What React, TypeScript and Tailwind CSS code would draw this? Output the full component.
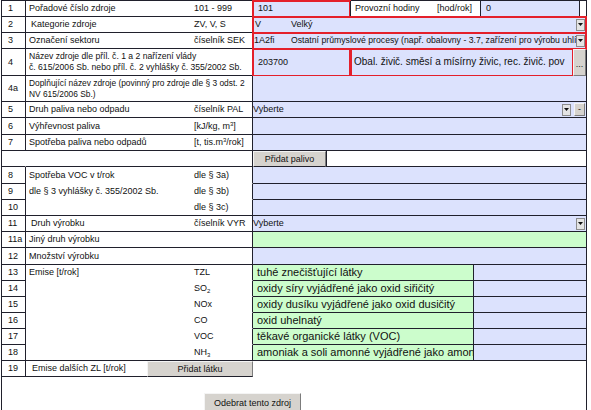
import type { ReactNode } from 'react';

const RED = 'outline-2 outline-[#e4202b] -outline-offset-1';

function Arrow() {
  return (
    <div className="ml-auto mr-[1px] flex h-[12px] w-[9px] shrink-0 items-center justify-center border border-[#8c8c8c] bg-[#e4e4e4]">
      <svg width="5" height="3" viewBox="0 0 5 3">
        <path d="M0 0h5L2.5 3z" fill="#111" />
      </svg>
    </div>
  );
}

function GreyButton({ children, className }: { children: ReactNode; className: string }) {
  return (
    <div
      className={`flex items-center justify-center border border-t-[#f4f4f4] border-l-[#f4f4f4] border-r-[#7c7c7c] border-b-[#7c7c7c] bg-[#d6d3ce] text-[9px] text-[#111] ${className}`}
    >
      {children}
    </div>
  );
}

interface RowProps {
  h: string;
  num?: string;
  noNumLine?: boolean;
  label?: ReactNode;
  unit?: ReactNode;
  openBottom?: boolean;
  children?: ReactNode;
}

function Row({ h, num, noNumLine, label, unit, openBottom, children }: RowProps) {
  return (
    <div className={`flex ${h}`}>
      <div
        className={`flex w-[24px] shrink-0 items-center border-b border-[#20202c] pl-[6px] ${
          noNumLine ? 'border-r border-r-white' : 'border-r'
        }`}
      >
        {num}
      </div>
      <div
        className={`flex w-[227px] shrink-0 items-center border-r border-b border-[#20202c] ${
          openBottom ? 'border-b-white' : ''
        }`}
      >
        <div className="w-[168px] shrink-0 whitespace-nowrap pl-[3px]">{label}</div>
        <div className="whitespace-nowrap">{unit}</div>
      </div>
      <div className="flex min-w-0 flex-1">{children}</div>
    </div>
  );
}

function Blue({ children, className = '' }: { children?: ReactNode; className?: string }) {
  return (
    <div
      className={`flex min-w-0 flex-1 items-center overflow-hidden whitespace-nowrap border-b border-[#20202c] bg-[#dce2fd] ${className}`}
    >
      {children}
    </div>
  );
}

const emissions = [
  ['13', 'Emise [t/rok]', 'TZL', 'tuhé znečišťující látky'],
  ['14', '', <>SO<sub className="text-[6px]">2</sub></>, 'oxidy síry vyjádřené jako oxid siřičitý'],
  ['15', '', 'NOx', 'oxidy dusíku vyjádřené jako oxid dusičitý'],
  ['16', '', 'CO', 'oxid uhelnatý'],
  ['17', '', 'VOC', 'těkavé organické látky (VOC)'],
  ['18', '', <>NH<sub className="text-[6px]">3</sub></>, 'amoniak a soli amonné vyjádřené jako amoniak'],
] as const;

export default function App() {
  return (
    <div className="h-[410px] w-[591px] overflow-hidden bg-white font-['Liberation_Sans',Arial,sans-serif] text-[9px] leading-none text-[#111]">
      <div className="ml-[1px] w-[586px] border-x border-t border-[#20202c]">
        <Row h="h-[16px]" num="1" label="Pořadové číslo zdroje" unit="101 - 999">
          <div className={`flex w-[97px] items-center border-b border-[#20202c] bg-[#dce2fd] pl-[5px] ${RED}`}>101</div>
          <div className="flex w-[130px] items-center border-b border-l border-[#20202c] bg-white pl-[4px]">
            <span className="w-[82px]">Provozní hodiny</span>
            <span>[hod/rok]</span>
          </div>
          <div className="flex w-[99px] shrink-0 items-center border-b border-l border-[#20202c] bg-[#dce2fd] pl-[5px]">0</div>
          <div className="flex-1 border-b border-l border-[#20202c] bg-white" />
        </Row>

        <Row h="h-[16px]" num="2" label={<span className="pl-[2px]">Kategorie zdroje</span>} unit="ZV, V, S">
          <Blue className={RED}>
            <span className="w-[38px] shrink-0 pl-[2px]">V</span>
            <span>Velký</span>
            <Arrow />
          </Blue>
        </Row>

        <Row h="h-[16px]" num="3" label="Označení sektoru" unit="číselník SEK">
          <Blue className={RED}>
            <span className="w-[38px] shrink-0 pl-[1px]">1A2fi</span>
            <span className="min-w-0 flex-1 overflow-hidden text-[8.7px]">
              Ostatní průmyslové procesy (např. obalovny - 3.7, zařízení pro výrobu uhlí
            </span>
            <Arrow />
          </Blue>
        </Row>

        <Row
          h="h-[27px]"
          num="4"
          label={
            <div className="text-[8.6px] leading-[11px]">
              Název zdroje dle příl. č. 1 a 2 nařízení vlády
              <br />
              č. 615/2006 Sb. nebo příl. č. 2 vyhlášky č. 355/2002 Sb.
            </div>
          }
        >
          <div className={`flex w-[97px] items-center border-b border-[#20202c] bg-[#dce2fd] pl-[5px] ${RED}`}>203700</div>
          <div
            className={`flex w-[223px] items-center overflow-hidden whitespace-nowrap border-b border-l-2 border-[#20202c] border-l-[#e4202b] bg-[#dce2fd] pl-[2px] text-[10px] ${RED}`}
          >
            Obal. živič. směsí a mísírny živic, rec. živič. pov
          </div>
          <GreyButton className="w-[13px] items-end pb-[6px]">...</GreyButton>
        </Row>

        <Row
          h="h-[26px]"
          num="4a"
          label={
            <div className="text-[8.4px] leading-[11px]">
              Doplňující název zdroje (povinný pro zdroje dle § 3 odst. 2
              <br />
              NV 615/2006 Sb.)
            </div>
          }
        >
          <Blue />
        </Row>

        <Row h="h-[16px]" num="5" label="Druh paliva nebo odpadu" unit="číselník PAL">
          <Blue>
            <span>Vyberte</span>
            <Arrow />
          </Blue>
          <div className="flex w-[14px] items-stretch border-b border-[#20202c] bg-[#dce2fd] py-[1px] pl-[2px] pr-[1px]">
            <GreyButton className="flex-1">-</GreyButton>
          </div>
        </Row>

        <Row h="h-[17px]" num="6" label="Výhřevnost paliva" unit={<>[kJ/kg, m<sup className="text-[6px]">3</sup>]</>}>
          <Blue />
        </Row>

        <Row h="h-[16px]" num="7" label="Spotřeba paliva nebo odpadů" unit={<>[t, tis.m<sup className="text-[6px]">3</sup>/rok]</>}>
          <Blue />
        </Row>

        <Row h="h-[16px]" noNumLine>
          <GreyButton className="w-[73px] border-b-[#20202c]">Přidat palivo</GreyButton>
          <div className="flex-1 border-b border-l border-[#20202c] bg-white" />
        </Row>

        <Row h="h-[17px]" num="8" label="Spotřeba VOC v t/rok" unit="dle § 3a)" openBottom>
          <Blue />
        </Row>
        <Row h="h-[16px]" num="9" label="dle § 3 vyhlášky č. 355/2002 Sb." unit="dle § 3b)" openBottom>
          <Blue />
        </Row>
        <Row h="h-[16px]" num="10" unit="dle § 3c)">
          <Blue />
        </Row>

        <Row h="h-[16px]" num="11" label={<span className="pl-[2px]">Druh výrobku</span>} unit="číselník VYR">
          <Blue>
            <span>Vyberte</span>
            <Arrow />
          </Blue>
        </Row>

        <Row h="h-[16px]" num="11a" label="Jiný druh výrobku">
          <div className="flex-1 border-b border-[#20202c] bg-[#ccfdcc]" />
        </Row>

        <Row h="h-[17px]" num="12" label="Množství výrobku">
          <Blue />
        </Row>

        {emissions.map(([n, label, unit, text], i) => (
          <Row
            key={n}
            h="h-[16px]"
            num={n}
            label={label}
            unit={unit}
            openBottom={i < emissions.length - 1}
          >
            <div className="flex w-[221px] items-center overflow-hidden whitespace-nowrap border-b border-r border-[#20202c] bg-[#ccfdcc] pl-[4px] text-[11px]">
              {text}
            </div>
            <Blue />
          </Row>
        ))}

        <div className="flex h-[16px]">
          <div className="flex w-[24px] shrink-0 items-center border-b border-r border-[#20202c] pl-[6px]">19</div>
          <div className="flex w-[121px] shrink-0 items-center border-b border-[#20202c] pl-[6px]">
            Emise dalších ZL [t/rok]
          </div>
          <GreyButton className="w-[106px] border-b-[#20202c]">Přidat látku</GreyButton>
        </div>

        <div className="h-[40px]">
          <GreyButton className="ml-[202px] mt-[16px] h-[20px] w-[97px]">Odebrat tento zdroj</GreyButton>
        </div>
      </div>
    </div>
  );
}
